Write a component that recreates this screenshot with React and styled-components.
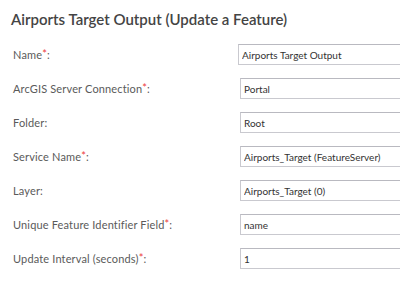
import React from "react";
import styled, {createGlobalStyle} from "styled-components";

const GlobalStyle = createGlobalStyle`
  body {
    margin: 0;
    background: #fff;
    overflow: hidden;
    font-family: Lato, "Open Sans", sans-serif;
  }
`

const fields = [
    {label: 'Name', required: true, value: 'Airports Target Output', shift: true},
    {label: 'ArcGIS Server Connection', required: true, value: 'Portal'},
    {label: 'Folder', value: 'Root'},
    {label: 'Service Name', required: true, value: 'Airports_Target (FeatureServer)'},
    {label: 'Layer', value: 'Airports_Target (0)'},
    {label: 'Unique Feature Identifier Field', required: true, value: 'name'},
    {label: 'Update Interval (seconds)', required: true, value: '1'},
]

const App = () => {
    return (
        <Panel>
            <GlobalStyle/>
            <Title>Airports Target Output (Update a Feature)</Title>
            <Form>
                {fields.map(f => (
                    <Row key={f.label}>
                        <Label>
                            {f.label}
                            {f.required && <Star>*</Star>}
                            :
                        </Label>
                        <Input readOnly value={f.value} $shift={f.shift}/>
                    </Row>
                ))}
            </Form>
        </Panel>
    )
}

const Panel = styled.div`
  width: 400px;
  height: 286px;
  overflow: hidden;
  padding: 9px 0 0 11px;
  box-sizing: border-box;
`

const Title = styled.h2`
  margin: 0;
  font-size: 15px;
  font-weight: 600;
  line-height: 20px;
  color: #444;
`

const Form = styled.div`
  display: flex;
  flex-direction: column;
  gap: 13px;
  margin-top: 15px;
  padding-left: 2px;
`

const Row = styled.div`
  display: grid;
  grid-template-columns: 227px 180px;
  align-items: center;
  height: 21px;
`

const Label = styled.span`
  font-size: 11px;
  color: #5a5a5a;
  white-space: nowrap;
  letter-spacing: 0.15px;
`

const Star = styled.sup`
  color: #ec3b3b;
  font-size: 11px;
  font-weight: 400;
  vertical-align: 1px;
  line-height: 0;
`

const Input = styled.input`
  box-sizing: border-box;
  width: 180px;
  height: 21px;
  margin-left: ${p => p.$shift ? '-2px' : '0'};
  padding: 0 3px;
  border: 1px solid #c9c9cf;
  border-top-color: #b9b9c0;
  border-radius: 0;
  background: #fff;
  font-family: Lato, "Open Sans", sans-serif;
  font-size: 10px;
  color: #333;
  outline: 0;
`

export default App
